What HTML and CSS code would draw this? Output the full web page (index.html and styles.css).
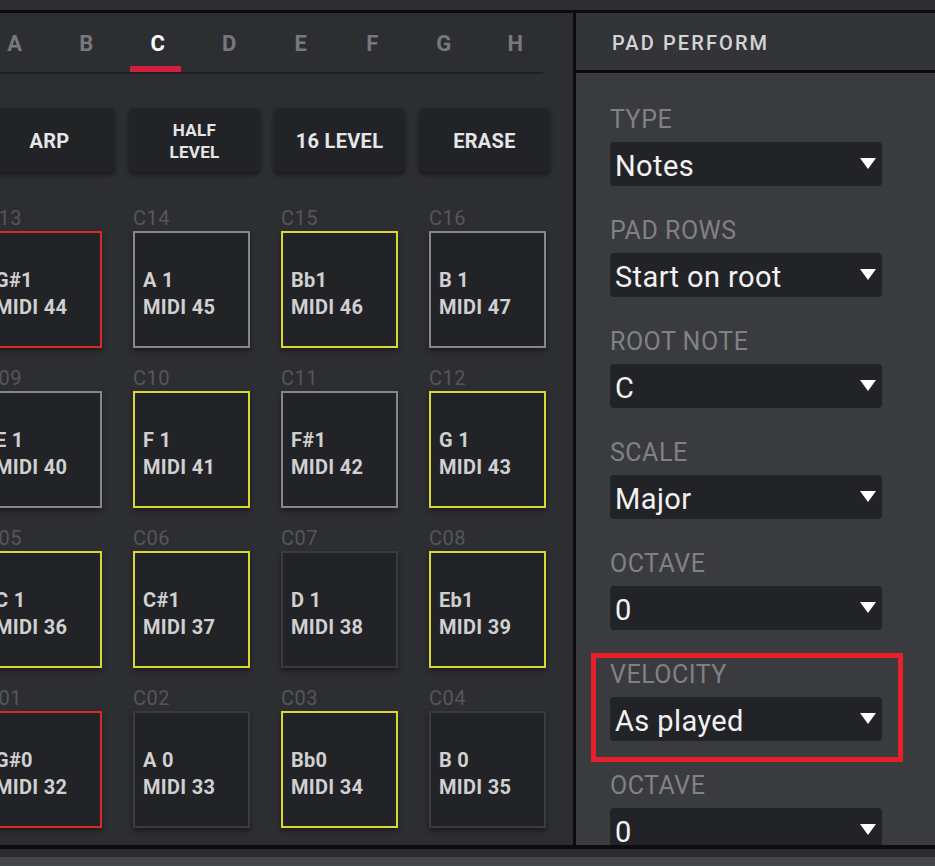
FILE: index.html
```html
<!DOCTYPE html>
<html lang="en">
<head>
    <meta charset="UTF-8">
    <title>Pad Perform</title>
    <link rel="stylesheet" href="styles.css">
</head>
<body>
    <div class="top-strip"></div>
    <div class="main">
        <div class="pads-panel">
            <div class="pads-inner">
                <div class="banks">
                    <div class="bank">A</div>
                    <div class="bank">B</div>
                    <div class="bank active">C</div>
                    <div class="bank">D</div>
                    <div class="bank">E</div>
                    <div class="bank">F</div>
                    <div class="bank">G</div>
                    <div class="bank">H</div>
                </div>

                <div class="mode-buttons">
                    <div class="mode-btn">ARP</div>
                    <div class="mode-btn small">HALF<br>LEVEL</div>
                    <div class="mode-btn">16 LEVEL</div>
                    <div class="mode-btn">ERASE</div>
                </div>

                <div class="pad-grid">
                    <div class="cell"><div class="pad-name">C13</div><div class="pad red"><span>G#1</span><span>MIDI 44</span></div></div>
                    <div class="cell"><div class="pad-name">C14</div><div class="pad grey"><span>A 1</span><span>MIDI 45</span></div></div>
                    <div class="cell"><div class="pad-name">C15</div><div class="pad yellow"><span>Bb1</span><span>MIDI 46</span></div></div>
                    <div class="cell"><div class="pad-name">C16</div><div class="pad grey"><span>B 1</span><span>MIDI 47</span></div></div>

                    <div class="cell"><div class="pad-name">C09</div><div class="pad grey"><span>E 1</span><span>MIDI 40</span></div></div>
                    <div class="cell"><div class="pad-name">C10</div><div class="pad yellow"><span>F 1</span><span>MIDI 41</span></div></div>
                    <div class="cell"><div class="pad-name">C11</div><div class="pad grey"><span>F#1</span><span>MIDI 42</span></div></div>
                    <div class="cell"><div class="pad-name">C12</div><div class="pad yellow"><span>G 1</span><span>MIDI 43</span></div></div>

                    <div class="cell"><div class="pad-name">C05</div><div class="pad yellow"><span>C 1</span><span>MIDI 36</span></div></div>
                    <div class="cell"><div class="pad-name">C06</div><div class="pad yellow"><span>C#1</span><span>MIDI 37</span></div></div>
                    <div class="cell"><div class="pad-name">C07</div><div class="pad"><span>D 1</span><span>MIDI 38</span></div></div>
                    <div class="cell"><div class="pad-name">C08</div><div class="pad yellow"><span>Eb1</span><span>MIDI 39</span></div></div>

                    <div class="cell"><div class="pad-name">C01</div><div class="pad red"><span>G#0</span><span>MIDI 32</span></div></div>
                    <div class="cell"><div class="pad-name">C02</div><div class="pad"><span>A 0</span><span>MIDI 33</span></div></div>
                    <div class="cell"><div class="pad-name">C03</div><div class="pad yellow"><span>Bb0</span><span>MIDI 34</span></div></div>
                    <div class="cell"><div class="pad-name">C04</div><div class="pad"><span>B 0</span><span>MIDI 35</span></div></div>
                </div>
            </div>
        </div>

        <div class="side-panel">
            <div class="side-header">PAD PERFORM</div>
            <div class="side-body">
                <div class="field">
                    <div class="field-label">TYPE</div>
                    <div class="select">Notes<span class="caret"></span></div>
                </div>
                <div class="field">
                    <div class="field-label">PAD ROWS</div>
                    <div class="select">Start on root<span class="caret"></span></div>
                </div>
                <div class="field">
                    <div class="field-label">ROOT NOTE</div>
                    <div class="select">C<span class="caret"></span></div>
                </div>
                <div class="field">
                    <div class="field-label">SCALE</div>
                    <div class="select">Major<span class="caret"></span></div>
                </div>
                <div class="field">
                    <div class="field-label">OCTAVE</div>
                    <div class="select">0<span class="caret"></span></div>
                </div>
                <div class="field highlighted">
                    <div class="field-label">VELOCITY</div>
                    <div class="select">As played<span class="caret"></span></div>
                </div>
                <div class="field">
                    <div class="field-label">OCTAVE</div>
                    <div class="select">0<span class="caret"></span></div>
                </div>
            </div>
        </div>
    </div>
    <div class="bottom-strip"></div>
</body>
</html>
```

FILE: styles.css
```css
body {
    margin: 0;
    width: 935px;
    height: 866px;
    overflow: hidden;
    background: #2c2d31;
    font-family: Roboto, 'Liberation Sans', sans-serif;
    color: #d2d2d2;
}

.top-strip {
    height: 10px;
    background: #2c2d31;
    border-bottom: 3px solid #0c0c0e;
}

.main {
    display: flex;
    height: 832px;
    overflow: hidden;
}

/* left side: bank tabs, mode buttons and pads */
.pads-panel {
    width: 573px;
    flex-shrink: 0;
    background: #2d2e32;
    border-right: 3px solid #0c0c0e;
    overflow: hidden;
}

.pads-inner {
    margin-left: -21px;
    width: 580px;
}

.banks {
    display: flex;
    height: 59px;
    width: 564px;
    border-bottom: 2px solid #1f2023;
}

.bank {
    flex: 0 0 71.5px;
    text-align: center;
    font-size: 22px;
    font-weight: 700;
    color: #77787c;
    padding-top: 18px;
    box-sizing: border-box;
    position: relative;
}

.bank.active {
    color: #ffffff;
}

.bank.active::after {
    content: "";
    position: absolute;
    left: 8px;
    bottom: 0;
    width: 51px;
    height: 6px;
    background: #d0203e;
}

.mode-buttons {
    display: flex;
    gap: 14px;
    padding-left: 5px;
    margin-top: 34px;
}

.mode-btn {
    width: 131px;
    height: 64px;
    background: #222327;
    border-radius: 5px;
    box-shadow: 0 3px 4px rgba(0,0,0,0.45);
    display: flex;
    align-items: center;
    justify-content: center;
    text-align: center;
    font-size: 20px;
    font-weight: 700;
    letter-spacing: 0.3px;
    line-height: 22px;
    color: #e6e6e6;
    padding-top: 2px;
    box-sizing: border-box;
}

.mode-btn.small {
    font-size: 17px;
}

.pad-grid {
    display: grid;
    grid-template-columns: repeat(4, 117px);
    column-gap: 31px;
    row-gap: 20px;
    padding-left: 6px;
    margin-top: 36px;
}

.pad-name {
    height: 20px;
    line-height: 20px;
    margin-bottom: 3px;
    font-size: 20px;
    letter-spacing: 0.5px;
    color: #55565a;
}

.pad {
    height: 117px;
    box-sizing: border-box;
    background: #222327;
    border: 2px solid #3a3b3e;
    box-shadow: 0 3px 5px rgba(0,0,0,0.4);
    display: flex;
    flex-direction: column;
    justify-content: center;
    padding: 8px 0 0 8px;
    font-size: 20px;
    font-weight: 700;
    letter-spacing: 0.3px;
    line-height: 27px;
    color: #d0d0d0;
}

.pad.red { border-color: #d42b2b; }
.pad.yellow { border-color: #d8d82e; }
.pad.grey { border-color: #86878a; }

/* right side: pad perform settings */
.side-panel {
    flex: 1;
    background: #3a3b3f;
    overflow: hidden;
}

.side-header {
    height: 57px;
    background: #333438;
    border-bottom: 3px solid #0c0c0e;
    padding-left: 36px;
    line-height: 60px;
    font-size: 20px;
    font-weight: 500;
    letter-spacing: 2.1px;
    color: #d4d4d4;
}

.side-body {
    padding: 32px 0 0 34px;
}

.field {
    margin-bottom: 30px;
    position: relative;
}

.field-label {
    height: 30px;
    line-height: 30px;
    margin-bottom: 7px;
    font-size: 25px;
    letter-spacing: 0.5px;
    color: #808185;
}

.select {
    width: 272px;
    height: 44px;
    box-sizing: border-box;
    background: #222327;
    border-radius: 4px;
    padding-left: 5px;
    line-height: 48px;
    font-size: 29px;
    letter-spacing: 0.4px;
    color: #f2f2f2;
    position: relative;
}

.caret {
    position: absolute;
    right: 6px;
    top: 16px;
    width: 0;
    height: 0;
    border-left: 8px solid transparent;
    border-right: 8px solid transparent;
    border-top: 11px solid #ffffff;
}

.field.highlighted::after {
    content: "";
    position: absolute;
    left: -19px;
    top: -7px;
    right: 32px;
    bottom: -21px;
    border: 5px solid #e8202a;
}

.bottom-strip {
    height: 21px;
    background: #2a2b2f;
    border-top: 4px solid #0c0c0e;
    box-sizing: border-box;
    box-shadow: inset 0 -9px 0 #45464a;
}
```
